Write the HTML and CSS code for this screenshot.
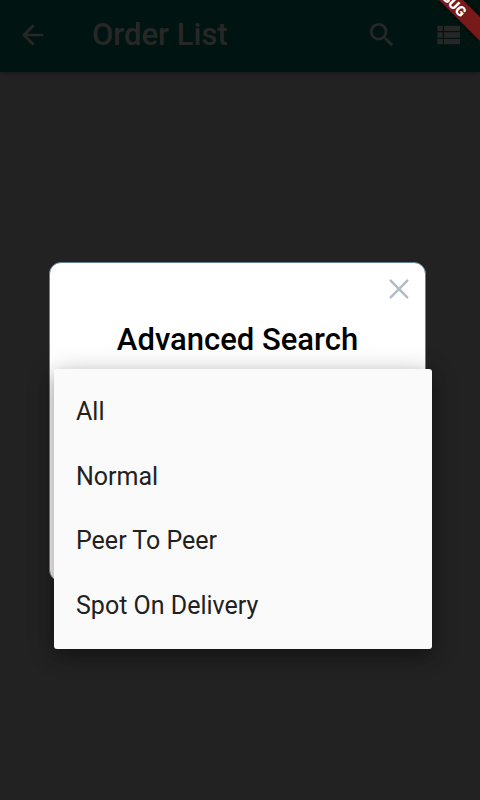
FILE: index.html
```html
<!DOCTYPE html>
<html lang="en">
<head>
<meta charset="utf-8">
<meta name="viewport" content="width=device-width, initial-scale=1">
<title>Order List</title>
<link rel="stylesheet" href="styles.css">
</head>
<body>
<header class="app-bar">
  <button class="icon-button" type="button" aria-label="Back">
    <svg class="icon" viewBox="0 0 24 24"><path d="M20.500 11H8.330l5.590-5.590L12.500 4l-8 8 8 8 1.410-1.410L8.330 13H20.500v-2z"/></svg>
  </button>
  <h1 class="app-title">Order List</h1>
  <button class="icon-button" type="button" aria-label="Search">
    <svg class="icon" viewBox="0 0 24 24"><path d="M15.5 14h-.79l-.28-.27C15.41 12.59 16 11.11 16 9.5 16 5.91 13.09 3 9.5 3S3 5.91 3 9.5 5.91 16 9.5 16c1.61 0 3.09-.59 4.23-1.57l.27.28v.79l5 4.99L20.49 19l-4.99-5zm-6 0C7.01 14 5 11.99 5 9.5S7.01 5 9.5 5 14 7.01 14 9.5 11.99 14 9.500 14z"/></svg>
  </button>
  <button class="icon-button" type="button" aria-label="List view">
    <svg class="icon" viewBox="0 0 24 24"><path d="M4 14h4v-4H4v4zm0 5h4v-4H4v4zM4 9h4V5H4v4zm5 5h12v-4H9v4zm0 5h12v-4H9v4zM9 5v4h12V5H9z"/></svg>
  </button>
</header>
<svg class="debug-banner" viewBox="0 0 56 56" aria-hidden="true">
  <path class="debug-shade" d="M15 0H39L56 17V41z"/>
  <path class="debug-band" d="M15 0H39L56 17V41z"/>
  <text class="debug-text" transform="translate(26 0) rotate(45)" x="20" y="5" text-anchor="end">DEBUG</text>
</svg>
<main class="content">
  <section class="dialog" role="dialog" aria-labelledby="dialog-title">
    <button class="close-button" type="button" aria-label="Close">
      <svg class="close-icon" viewBox="0 0 22 22"><path d="M2.700 2.700l16.600 16.600M19.300 2.700L2.700 19.300"/></svg>
    </button>
    <h2 class="dialog-title" id="dialog-title">Advanced Search</h2>
    <div class="menu" role="listbox" aria-label="Order type">
      <button class="menu-item" type="button" role="option">All</button>
      <button class="menu-item" type="button" role="option">Normal</button>
      <button class="menu-item" type="button" role="option">Peer To Peer</button>
      <button class="menu-item" type="button" role="option">Spot On Delivery</button>
    </div>
  </section>
</main>
</body>
</html>
```
FILE: styles.css
```css
* {
  box-sizing: border-box;
}

body {
  margin: 0;
  min-height: 100vh;
  background: #222222;
  font-family: Roboto, "Liberation Sans", sans-serif;
}

button {
  margin: 0;
  padding: 0;
  border: 0;
  background: none;
  font: inherit;
  color: inherit;
}

.app-bar {
  display: flex;
  align-items: center;
  gap: 2px;
  height: 72px;
  padding-bottom: 2px;
  background: #001511;
  color: #272727;
  box-shadow: 0 1px 4px rgba(0, 0, 0, 0.4);
}

.icon-button {
  display: flex;
  align-items: center;
  justify-content: center;
  width: 64px;
  height: 64px;
}

.icon {
  width: 32px;
  height: 32px;
  fill: currentColor;
}

.app-title {
  flex: 1;
  margin: 0;
  padding-left: 26px;
  font-size: 31px;
  line-height: 36px;
  font-weight: 500;
}

.debug-banner {
  position: absolute;
  top: 0;
  right: 0;
  width: 56px;
  height: 56px;
}

.debug-band {
  fill: #791a1a;
}

.debug-shade {
  filter: blur(3px);
  opacity: 0.6;
}

.debug-text {
  fill: #ffffff;
  font-size: 14px;
  font-weight: 900;
}

.content {
  padding: 190px 54px 0 49px;
}

.dialog {
  position: relative;
  display: flex;
  flex-direction: column;
  min-height: 320px;
  padding: 10px;
  border: 1px solid #648392;
  border-radius: 12px;
  background: #ffffff;
}

.close-button {
  align-self: flex-end;
  display: flex;
  align-items: center;
  justify-content: center;
  width: 32px;
  height: 32px;
}

.close-icon {
  width: 22px;
  height: 22px;
  fill: none;
  stroke: #b0bcc8;
  stroke-width: 2.5;
  stroke-linecap: round;
}

.dialog-title {
  margin: 17px 0 0;
  color: #000000;
  font-size: 31px;
  line-height: 36px;
  font-weight: 500;
  text-align: center;
}

.menu {
  position: absolute;
  top: 106px;
  left: 4px;
  right: -7px;
  display: grid;
  grid-auto-rows: 1fr;
  min-height: 280px;
  padding: 11px 0;
  border-radius: 3px;
  background: #fafafa;
  box-shadow: 0 8px 16px rgba(0, 0, 0, 0.24), 0 4px 28px rgba(0, 0, 0, 0.24);
}

.menu-item {
  padding: 0 22px;
  color: #212121;
  font-size: 25px;
  line-height: 32px;
  text-align: left;
}
```
